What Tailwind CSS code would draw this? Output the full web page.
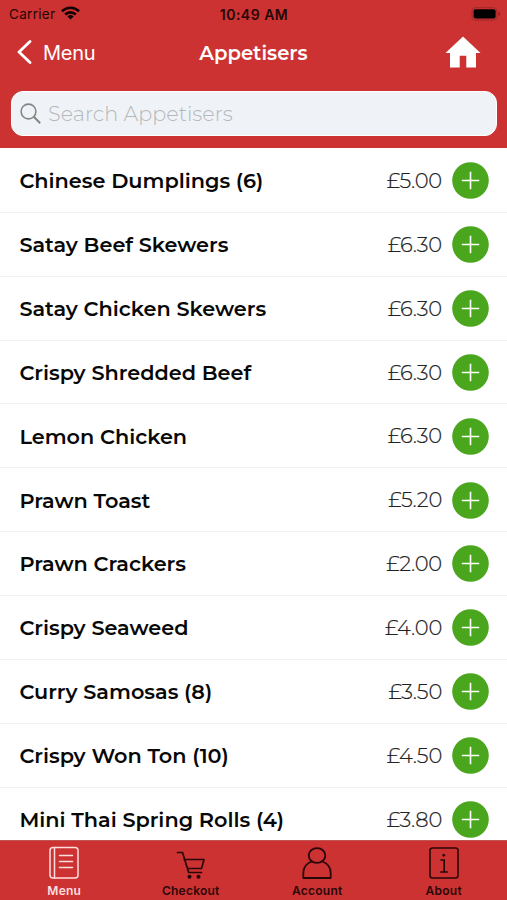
<!DOCTYPE html>
<html lang="en">
<head>
<meta charset="utf-8">
<title>Appetisers</title>
<script src="https://cdn.jsdelivr.net/npm/@tailwindcss/browser@4"></script>
</head>
<body class="w-[507px] h-[900px] overflow-hidden bg-white font-['Montserrat','Inter',sans-serif]">
<div class="flex h-[900px] flex-col">
  <header class="h-[148px] shrink-0 bg-[#cd3232]">
    <div class="grid h-7 grid-cols-3 items-center pl-[9px] pr-[6px] font-['Inter',sans-serif] text-[#240606]">
      <div class="flex items-center gap-[6px]">
        <span class="text-[13.5px] tracking-[0.3px]">Carrier</span>
        <svg class="-mt-[2px] h-[14px] w-[19px]" viewBox="0 0 19 14" fill="none" stroke="#120202" stroke-width="2.6"><path d="M1 5.2a12.2 12.2 0 0 1 17 0M4.2 8.5a7.6 7.6 0 0 1 10.6 0"/><path d="M9.5 13.4 6.4 10.4a4.5 4.5 0 0 1 6.2 0z" fill="#120202" stroke="none"/></svg>
      </div>
      <span class="-ml-[2px] text-center text-[14px] font-semibold tracking-[0.5px]">10:49 AM</span>
      <svg class="-mt-[1px] h-[14px] w-[30px] justify-self-end" viewBox="0 0 30 14"><rect x="1" y=".7" width="25" height="12.4" rx="3.4" fill="none" stroke="#a02828"/><rect x="2.6" y="2.3" width="22" height="9.2" rx="2" fill="#000"/><path d="M27.6 4.6c2 .8 2 3.8 0 4.6z" fill="#8b2020"/></svg>
    </div>
    <div class="grid h-[50px] grid-cols-3 items-center pl-[17px] pr-[26px] text-white">
      <div class="flex items-center gap-[12px]">
        <svg class="-mt-[2px] h-6 w-[15px]" viewBox="0 0 15 24" fill="none" stroke="white" stroke-width="2.8" stroke-linecap="round" stroke-linejoin="round"><path d="M13 1.500 2 12l11 10.500"/></svg>
        <span class="-ml-px font-['Inter',sans-serif] text-[20px] tracking-[-0.3px]">Menu</span>
      </div>
      <h1 class="whitespace-nowrap pl-[9px] pt-[2px] text-center text-[19.6px] font-semibold">Appetisers</h1>
      <svg class="-mt-[2px] h-[32px] w-[36px] justify-self-end" viewBox="0 0 36 32" fill="white"><path d="M18 .5 35.5 17H31v14.5H21.3V19.8h-6.6v11.7H5V17H.5z"/></svg>
    </div>
    <div class="ml-[11px] mr-[10px] mt-[13px] flex h-[45px] items-center gap-[7px] rounded-[12px] border border-white bg-[#eff3f7] pl-[8px]">
      <svg class="h-[21px] w-[21px]" viewBox="0 0 21 21" fill="none" stroke="#858585" stroke-width="1.6"><circle cx="8.5" cy="8.5" r="7.4"/><path d="m13.8 13.8 6.4 6.4" stroke-width="2"/></svg>
      <span class="text-[20.800px] font-light text-[#b5b8bb]">Search Appetisers</span>
    </div>
  </header>
  <main id="list" class="h-[692px] shrink-0 overflow-hidden"></main>
  <nav class="grid h-[60px] shrink-0 grid-cols-4 border-t border-[#bd5555] bg-[#cd3232] pl-[1px] text-center font-['Inter',sans-serif] text-[12px] font-semibold tracking-[0.25px] text-[#290707]">
    <div class="flex flex-col items-center pt-[5px] text-[#ffdede]">
      <svg class="h-[34px] w-[32px]" viewBox="0 0 32 34" fill="none" stroke="currentColor" stroke-width="1.5" stroke-linecap="round"><rect x="2" y="1.5" width="28" height="30.5" rx="3"/><path d="M6.5 1.5V32M11.5 9.5h13M11.5 15.5h13M11.5 21.5h13"/></svg>
      <span class="mt-[2px]">Menu</span>
    </div>
    <div class="flex flex-col items-center pt-[5px]">
      <svg class="h-[34px] w-[32px]" viewBox="0 0 32 34" fill="none" stroke="currentColor" stroke-width="1.7" stroke-linecap="round" stroke-linejoin="round"><path d="M2.500 6.500h5l6.200 20h12.800M9.200 13.500H29L26.500 22.500H12.500"/><circle cx="14.500" cy="30.700" r="1.2" fill="currentColor"/><circle cx="23.500" cy="30.700" r="1.2" fill="currentColor"/></svg>
      <span class="mt-[2px]">Checkout</span>
    </div>
    <div class="flex flex-col items-center pt-[5px]">
      <svg class="h-[34px] w-[32px]" viewBox="0 0 32 34" fill="none" stroke="currentColor" stroke-width="1.8" stroke-linejoin="round"><ellipse cx="16" cy="9.500" rx="8.300" ry="7.400"/><path d="M10.700 15.500C5 17.500 2.300 22 2.300 27v5h27.400V27c0-5-2.700-9.500-8.400-11.500"/></svg>
      <span class="mt-[2px]">Account</span>
    </div>
    <div class="flex flex-col items-center pt-[5px]">
      <svg class="h-[34px] w-[32px]" viewBox="0 0 32 34" fill="none" stroke="currentColor" stroke-width="1.6" stroke-linecap="round"><rect x="2" y="2" width="28" height="30" rx="2.500"/><path d="M13 14h3.200v12M12.800 26h6.700"/><circle cx="15.700" cy="9.300" r="1" fill="currentColor" stroke-width="1"/></svg>
      <span class="mt-[2px]">About</span>
    </div>
  </nav>
</div>
<script>
const items = [
  ["Chinese Dumplings (6)", "£5.00"],
  ["Satay Beef Skewers", "£6.30"],
  ["Satay Chicken Skewers", "£6.30"],
  ["Crispy Shredded Beef", "£6.30"],
  ["Lemon Chicken", "£6.30"],
  ["Prawn Toast", "£5.20"],
  ["Prawn Crackers", "£2.00"],
  ["Crispy Seaweed", "£4.00"],
  ["Curry Samosas (8)", "£3.50"],
  ["Crispy Won Ton (10)", "£4.50"],
  ["Mini Thai Spring Rolls (4)", "£3.80"]
];
document.getElementById("list").innerHTML = items.map(([name, price]) => `
  <div class="flex h-[63.9px] items-center border-b border-[#f3f3f3] pl-[19.400px] pr-[18px] pt-[0.600px] first:h-[64.8px] first:pt-[1px]">
    <span class="flex-1 whitespace-nowrap text-[20.800px] font-semibold text-[#080808]">${name}</span>
    <span class="mr-[10px] text-[21px] font-light tracking-[-0.2px] text-[#222] [-webkit-text-stroke:0.2px_#222]">${price}</span>
    <svg class="h-[37px] w-[37px]" viewBox="0 0 37 37"><circle cx="18.500" cy="18.500" r="18.300" fill="#4aa61c"/><path d="M18.500 9.800v17.400M9.800 18.500h17.400" stroke="white" stroke-width="1.600"/></svg>
  </div>`).join("");
</script>
</body>
</html>
